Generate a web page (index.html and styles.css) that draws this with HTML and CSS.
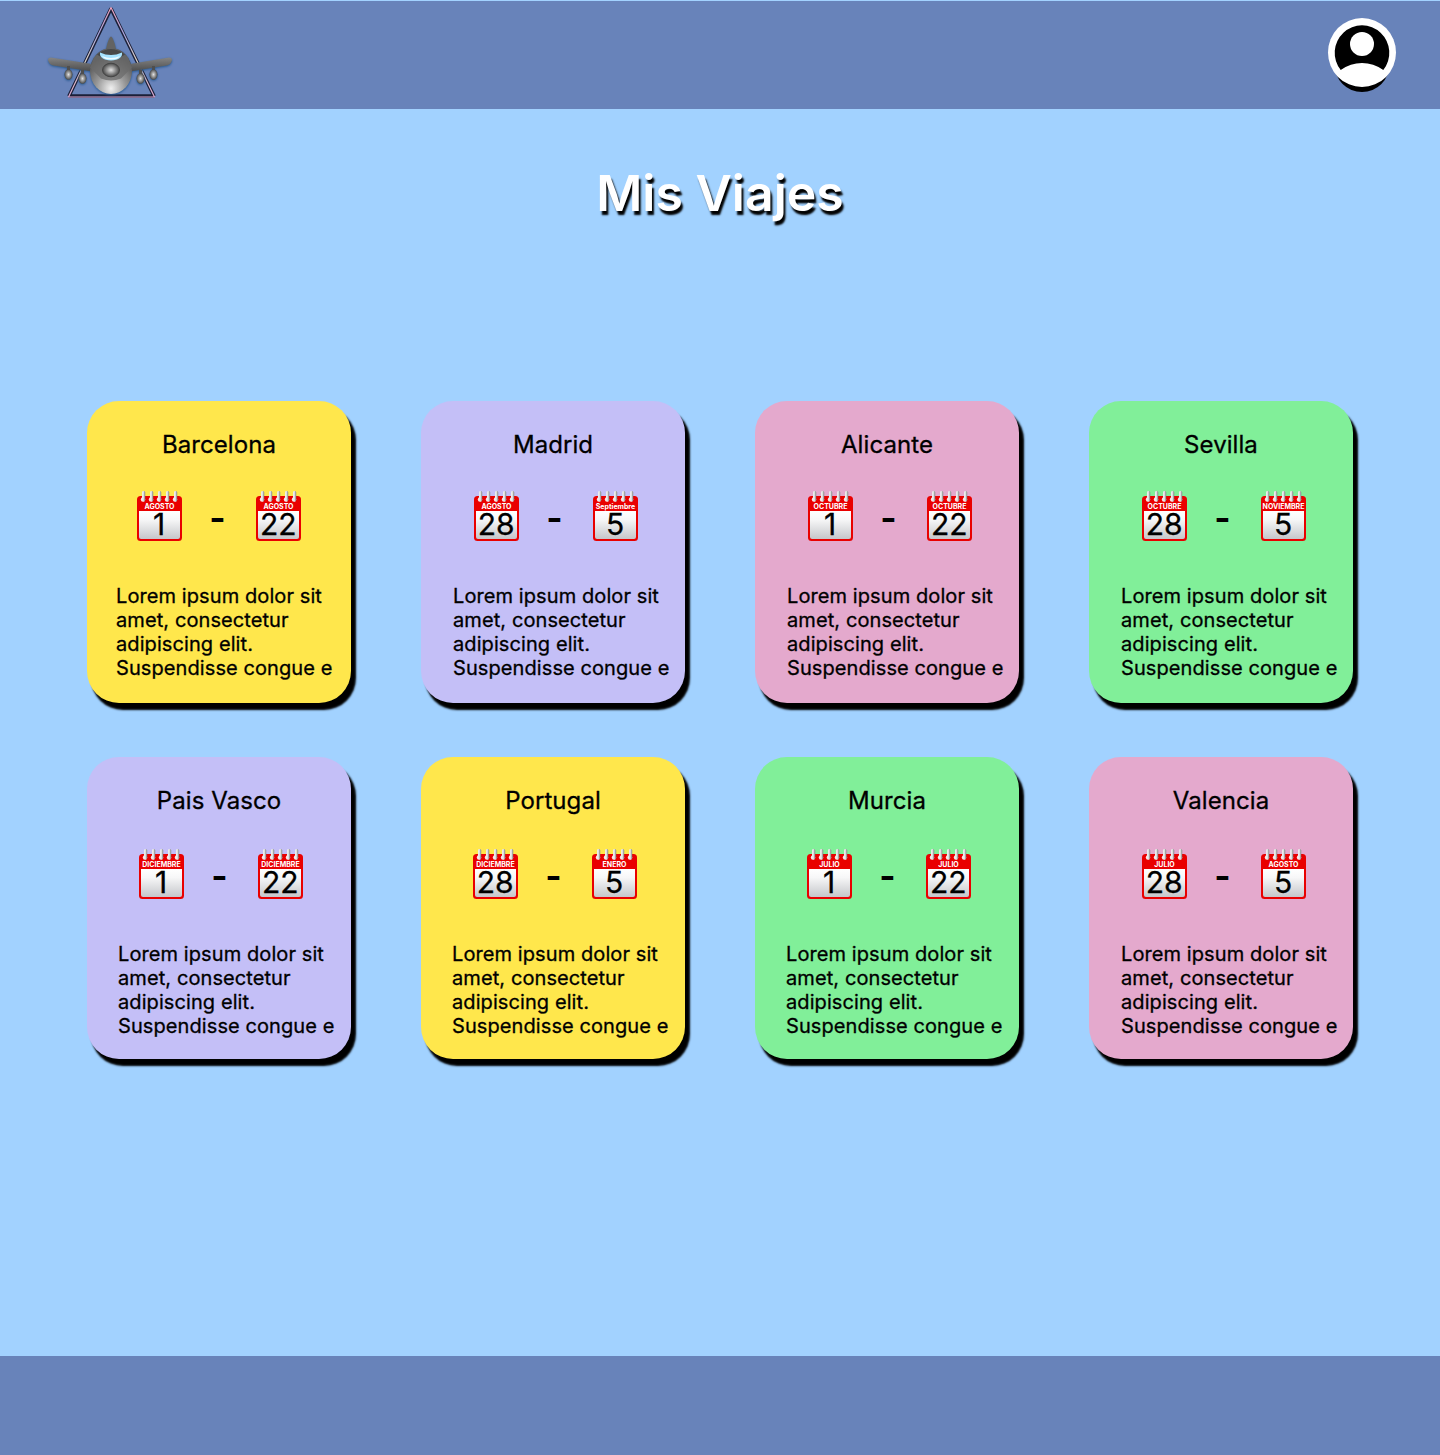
FILE: index.html
```html
<!DOCTYPE html>
<html lang="es">
<head>
<meta charset="utf-8">
<title>Mis Viajes</title>
<link rel="stylesheet" href="styles.css">
</head>
<body>
<header class="topbar">
  <svg class="logo" viewBox="0 0 140 108" aria-label="Logo">
    <defs>
      <linearGradient id="edge" x1="0" y1="0" x2="0" y2="1"><stop offset="0" stop-color="#f3a3bd"/><stop offset=".3" stop-color="#a9a5df"/><stop offset=".6" stop-color="#e2d5c5"/><stop offset="1" stop-color="#d9a4cf"/></linearGradient>
      <linearGradient id="wing" x1="0" y1="0" x2="0" y2="1"><stop offset="0" stop-color="#858585"/><stop offset="1" stop-color="#4b4b4b"/></linearGradient>
      <radialGradient id="hull" cx=".5" cy=".88" r=".7"><stop offset="0" stop-color="#f0f0f0"/><stop offset=".5" stop-color="#989898"/><stop offset="1" stop-color="#555"/></radialGradient>
      <radialGradient id="nose"><stop offset="0" stop-color="#e2e2e2"/><stop offset=".6" stop-color="#858585"/><stop offset="1" stop-color="#484848"/></radialGradient>
    </defs>
    <path d="M71 8.500 29 96h85z" fill="none" stroke="#1b2038" stroke-width="3.600" stroke-linejoin="bevel"/>
    <path d="M71 7.500 28.500 97h86z" fill="none" stroke="url(#edge)" stroke-width="1.200" stroke-linejoin="bevel"/>
    <g class="plane">
      <path d="M71 36.500c-2 1-4 7-5 13h10c-1-6-3-12-5-13z" fill="#636363"/>
      <path d="M52 64 11 57.500q-3 0-3 2.500 1 4.500 5 5.500L52 71.500zM90 64l39-6.500q3 0 3 2.500-1 4.500-5 5.500L90 71.500z" fill="url(#wing)"/>
      <path d="M27 66h3v5h-3zM41 70h3v5h-3zM99 70h3v5h-3zM112 66h3v5h-3z" fill="#4e4e4e"/>
      <g fill="url(#nose)"><ellipse cx="28.500" cy="74.500" rx="4" ry="5.300"/><ellipse cx="42.500" cy="78.500" rx="4" ry="5.300"/><ellipse cx="100.500" cy="78.500" rx="4" ry="5.300"/><ellipse cx="113.500" cy="74.500" rx="4" ry="5.300"/></g>
      <ellipse cx="71" cy="71" rx="21" ry="23" fill="url(#hull)"/>
      <path d="M54 57.500q17-19 34 0l4 10-11 11q-10 4-20 0L50 67.500z" fill="#6b6b6b" opacity=".75"/>
      <path d="M57 54.500q14-11 28 0-14 10-28 0z" fill="#484848"/>
      <ellipse cx="71" cy="70" rx="8.500" ry="6.800" fill="url(#nose)" stroke="#454545"/>
      <path d="M60 52.500q11 5 22 0 1 7-11 8-12-1-11-8z" fill="#a5e2ff"/>
      <path d="M62 56q9 4 18 0-2 3.500-9 3.500t-9-3.500z" fill="#effbff"/>
    </g>
  </svg>
  <svg class="avatar" viewBox="0 0 68 70" aria-label="Perfil">
    <circle cx="34" cy="46.500" r="27.500" fill="#000"/>
    <ellipse cx="34" cy="34.500" rx="34" ry="34.500" fill="#fff"/>
    <path d="M12.700 52A27.300 27.500 0 1 1 55.300 52Q45.500 45 34 45T12.700 52z" fill="#000"/>
    <circle cx="34" cy="26" r="12" fill="#fff"/>
  </svg>
</header>

<main class="content">
  <h1 class="heading">Mis Viajes</h1>
  <section class="trips" id="trips"></section>
</main>
<footer class="footer"></footer>

<svg class="sprite" aria-hidden="true">
  <defs>
    <linearGradient id="paper" x1="0" y1="0" x2="0" y2="1"><stop offset="0" stop-color="#fff"/><stop offset=".3" stop-color="#f7f7f8"/><stop offset="1" stop-color="#c5c6ca"/></linearGradient>
    <linearGradient id="ring" x1="0" y1="0" x2="1" y2="0"><stop offset="0" stop-color="#f4f4f4"/><stop offset=".5" stop-color="#ddd"/><stop offset="1" stop-color="#777"/></linearGradient>
    <g id="coil"><circle cx="1" cy="8.500" r="2.200" fill="#fff" opacity=".9"/><rect width="3.200" height="10.500" rx="1.400" fill="url(#ring)"/></g>
    <symbol id="calendar" viewBox="0 0 45 50">
      <rect y="5" width="45" height="45" rx="3.500" fill="#e90000"/>
      <path d="M2 20h41v26q0 2-2 2H4q-2 0-2-2z" fill="url(#paper)"/>
      <use href="#coil" x="5"/><use href="#coil" x="13"/><use href="#coil" x="21"/><use href="#coil" x="29"/><use href="#coil" x="37"/>
    </symbol>
  </defs>
</svg>
<script src="trips.js"></script>
</body>
</html>
```
FILE: styles.css
```css
* { box-sizing: border-box; }

body {
  margin: 0;
  height: 1455px;
  display: flex;
  flex-direction: column;
  background: #a2d2ff;
  color: #000;
  font-family: Inter, "Liberation Sans", sans-serif;
}

.topbar {
  height: 109px;
  border-top: 1px solid #a2d2ff;
  background: #6883ba;
  display: flex;
  justify-content: space-between;
  align-items: flex-start;
  padding: 0 44px 0 40px;
}

.logo { width: 140px; height: 108px; margin-top: -1px; }
.plane { filter: drop-shadow(0 1px 1px #285a91); }
.avatar {
  width: 68px;
  height: 70px;
  margin-top: 17px;
  overflow: visible;
}

.content {
  flex: 1;
  display: flex;
  flex-direction: column;
  align-items: center;
}

.heading {
  margin: 54px 0 0;
  font-size: 50px;
  line-height: 60px;
  font-weight: 600;
  color: #fff;
  text-shadow: 2px 4px 2px #000;
}

.trips {
  margin-top: 178px;
  display: grid;
  grid-template-columns: repeat(4, 264px);
  grid-auto-rows: 302px;
  gap: 54px 70px;
}

.card {
  border-radius: 32px;
  padding-top: 29px;
  box-shadow: 4.5px 7px 2px #000;
}
.yellow { background: #ffe74c; }
.lilac { background: #c4bff7; }
.pink { background: #e4a9cd; }
.green { background: #81ef99; }

.city {
  margin: 0;
  font-size: 24px;
  line-height: 29px;
  font-weight: 400;
  letter-spacing: .08px;
  text-align: center;
  -webkit-text-stroke: .3px #000;
}

.details { padding: 32px 0 0 32px; }
.row-two .details { padding: 34px 0 0 31px; }
.details.first { padding-left: 29px; }
.row-two .details.last { padding-left: 32px; }

.dates {
  display: flex;
  align-items: center;
  height: 50px;
  padding-left: 21px;
}
.calendar { width: 45px; height: 50px; overflow: visible; }
.month { font-size: 7px; font-weight: 700; fill: #fff; text-anchor: middle; }
.day { font-size: 30px; font-weight: 400; text-anchor: middle; stroke: #000; stroke-width: .3px; }
.dash {
  width: 74px;
  padding: 2px 3px 0 0;
  text-align: center;
  font-size: 35px;
  line-height: 48px;
  font-weight: 700;
}

.note {
  margin: 43px 0 0;
  font-size: 20px;
  line-height: 24px;
  font-weight: 400;
  letter-spacing: .09px;
  white-space: nowrap;
  -webkit-text-stroke: .3px #000;
}

.footer { height: 99px; background: #6883ba; }
.sprite { position: absolute; width: 0; height: 0; }
```
FILE: trips.js
```js
const trips = [
  ["Barcelona", "yellow", ["AGOSTO", 1], ["AGOSTO", 22], "first"],
  ["Madrid", "lilac", ["AGOSTO", 28], ["Septiembre", 5], ""],
  ["Alicante", "pink", ["OCTUBRE", 1], ["OCTUBRE", 22], ""],
  ["Sevilla", "green", ["OCTUBRE", 28], ["NOVIEMBRE", 5], ""],
  ["Pais Vasco", "lilac", ["DICIEMBRE", 1], ["DICIEMBRE", 22], ""],
  ["Portugal", "yellow", ["DICIEMBRE", 28], ["ENERO", 5], ""],
  ["Murcia", "green", ["JULIO", 1], ["JULIO", 22], ""],
  ["Valencia", "pink", ["JULIO", 28], ["AGOSTO", 5], "last"]
];

const calendar = ([month, day]) => `
  <svg class="calendar" viewBox="0 0 45 50">
    <use href="#calendar" width="45" height="50"/>
    <text class="month" x="22.5" y="18">${month}</text>
    <text class="day" x="22.2" y="44.2">${day}</text>
  </svg>`;

document.getElementById("trips").innerHTML = trips.map(([city, color, from, to, place], i) => `
  <article class="card ${color} ${i > 3 ? "row-two" : ""}">
    <h2 class="city">${city}</h2>
    <div class="details ${place}">
      <div class="dates">${calendar(from)}<span class="dash">-</span>${calendar(to)}</div>
      <p class="note">Lorem ipsum dolor sit<br>amet, consectetur<br>adipiscing elit.<br>Suspendisse congue e</p>
    </div>
  </article>`).join("");
```
